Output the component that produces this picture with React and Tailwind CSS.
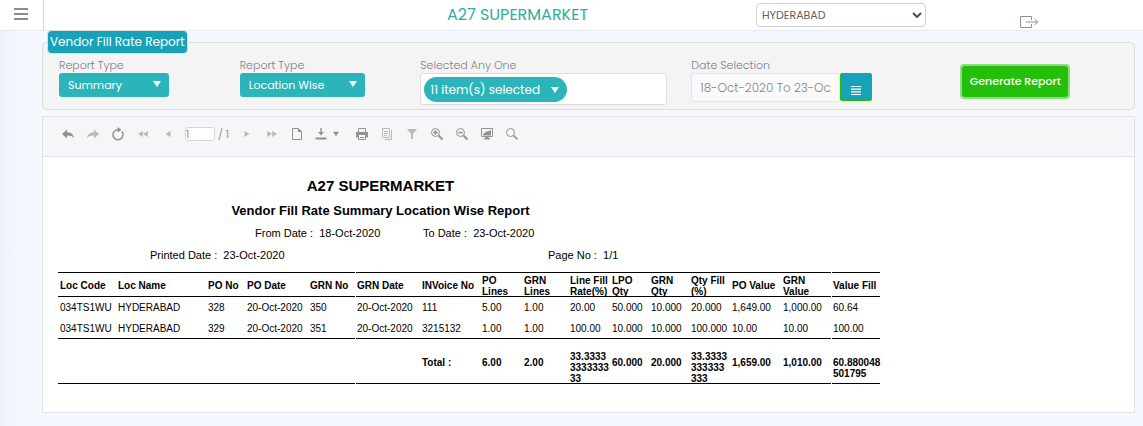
import React from "react";

const columns = [
  ["Loc Code", "w-[58px]"],
  ["Loc Name", "w-[90px]"],
  ["PO No", "w-[39px]"],
  ["PO Date", "w-[63px]"],
  ["GRN No", "w-[47px]"],
  ["GRN Date", "w-[65px]"],
  ["INVoice No", "w-[60px]"],
  ["PO\nLines", "w-[42px]"],
  ["GRN\nLines", "w-[46px]"],
  ["Line Fill\nRate(%)", "w-[42px]"],
  ["LPO\nQty", "w-[39px]"],
  ["GRN\nQty", "w-[40px]"],
  ["Qty Fill\n(%)", "w-[41px]"],
  ["PO Value", "w-[51px]"],
  ["GRN\nValue", "w-[50px]"],
  ["Value Fill", "w-[49px]"],
];

const rows = [
  ["034TS1WU", "HYDERABAD", "328", "20-Oct-2020", "350", "20-Oct-2020", "111", "5.00", "1.00", "20.00", "50.000", "10.000", "20.000", "1,649.00", "1,000.00", "60.64"],
  ["034TS1WU", "HYDERABAD", "329", "20-Oct-2020", "351", "20-Oct-2020", "3215132", "1.00", "1.00", "100.00", "10.000", "10.000", "100.000", "10.00", "10.00", "100.00"],
];

const totals = ["", "", "", "", "", "", "Total :", "6.00", "2.00", "33.3333\n3333333\n33", "60.000", "20.000", "33.3333\n333333\n333", "1,659.00", "1,010.00", "60.880048\n501795"];

// The rules of the report break before the GRN Date and Value Fill columns.
const startsSection = (i) => i === 5 || i === 15;
const cellEdge = (i) => (startsSection(i) ? "border-l border-white pl-px" : "pl-0.5");

function Icon({ children, dim }) {
  return (
    <svg
      viewBox="0 0 14 14"
      className={"h-3.5 w-3.5 " + (dim ? "text-[#b9b9bb]" : "text-[#929294]")}
      fill="none"
      stroke="currentColor"
      strokeWidth="1"
      aria-hidden="true"
    >
      {children}
    </svg>
  );
}

function Tool({ label, dim, children }) {
  return (
    <button type="button" aria-label={label} className="flex h-6 w-[25px] items-center justify-center">
      <Icon dim={dim}>{children}</Icon>
    </button>
  );
}

function Triangle({ className }) {
  return (
    <svg viewBox="0 0 8 6" className={"h-1.5 shrink-0 " + className} fill="currentColor" aria-hidden="true">
      <path d="M0 0h8L4 6z" />
    </svg>
  );
}

function TealSelect({ id, value, width }) {
  return (
    <div className={"relative " + width}>
      <select id={id} className="block h-6 w-full appearance-none rounded-[3px] bg-[#2bb5bb] pl-[9px] text-[11px] text-white">
        <option>{value}</option>
      </select>
      <Triangle className="pointer-events-none absolute top-2 right-2 w-2 text-white" />
    </div>
  );
}

const labelClass = "block text-[11px] leading-4 font-light text-[#7c7c8a]";

function Header() {
  return (
    <header className="grid h-[31px] grid-cols-[44px_250fr_447fr_200fr_202fr] border-b border-[#e3eaf1] bg-white">
      <div className="flex items-center border-r border-[#d3d6da] pb-0.5 pl-3.5">
        <button type="button" aria-label="Menu" className="flex flex-col gap-[3px]">
          <span className="h-0.5 w-3.5 bg-[#868c96]" />
          <span className="h-0.5 w-3.5 bg-[#868c96]" />
          <span className="h-0.5 w-3.5 bg-[#868c96]" />
        </button>
      </div>
      <h1 className="col-start-3 text-center text-base leading-[29px] text-[#2aaf9f]">A27 SUPERMARKET</h1>
      <div className="px-[15px] pt-[3px]">
        <div className="relative">
          <select aria-label="Location" className="block h-6 w-full appearance-none rounded border border-[#cfd3d7] bg-white pl-[5px] text-[11px] text-[#5a6068]">
            <option>HYDERABAD</option>
          </select>
          <svg viewBox="0 0 10 6" className="pointer-events-none absolute top-[9px] right-1 h-1.5 w-2.5 text-[#4a4f55]" fill="none" stroke="currentColor" strokeWidth="2" aria-hidden="true">
            <path d="M1 1l4 4 4-4" />
          </svg>
        </div>
      </div>
      <div className="pt-4 pl-[79px]">
        <button type="button" aria-label="Log out" className="block">
          <svg viewBox="0 0 19 12" className="h-3 w-[19px] text-[#8b929c]" fill="none" stroke="currentColor" aria-hidden="true">
            <path d="M11.500 4V.5H.5v11h11V8M6 6h12M14.500 3L17.800 6l-3.300 3" />
          </svg>
        </button>
      </div>
    </header>
  );
}

function Filters() {
  return (
    <fieldset className="rounded border border-[#dadde1] bg-[#f4f4f4] pr-1.5 pl-px">
      <legend className="ml-1 h-[22px] rounded-[3px] bg-[#18a2b8] px-0.5 text-xs leading-[22px] whitespace-nowrap text-white outline outline-[#dadde1]">
        Vendor Fill Rate Report
      </legend>
      <div className="grid grid-cols-[2fr_2fr_3fr_3fr_2fr] pt-1 pb-1">
        <div className="pl-[15px]">
          <label htmlFor="report-type" className={labelClass}>Report Type</label>
          <TealSelect id="report-type" value="Summary" width="w-[110px]" />
        </div>
        <div className="pl-[15px]">
          <label htmlFor="report-group" className={labelClass}>Report Type</label>
          <TealSelect id="report-group" value="Location Wise" width="w-[125px]" />
        </div>
        <div className="pr-[9px] pl-[15px]">
          <label htmlFor="items" className={labelClass}>Selected Any One</label>
          <div className="rounded-[3px] border border-[#dadde1] bg-white px-[3px] pt-[3px] pb-0.5">
            <button id="items" type="button" className="flex h-[25px] w-[143px] items-center justify-between rounded-full bg-[#2bb5bb] pr-2 pl-1.5 text-xs text-white">
              11 item(s) selected
              <Triangle className="w-2" />
            </button>
          </div>
        </div>
        <div className="pl-[15px]">
          <label htmlFor="dates" className={labelClass}>Date Selection</label>
          <div className="flex w-[181px]">
            <input id="dates" readOnly defaultValue="18-Oct-2020 To 23-Oct-2020" className="h-[29px] min-w-0 flex-1 rounded-[3px] border border-[#e2e4e6] bg-[#fafafa] px-2 text-xs font-light text-[#858585]" />
            <button type="button" aria-label="Choose dates" className="flex h-7 w-8 items-end justify-center rounded-[2px] border border-[#24bf0b] bg-[#18a2b8] pb-[5px]">
              <svg viewBox="0 0 10 9" className="h-[9px] w-2.5 text-white" fill="currentColor" aria-hidden="true">
                <path d="M0 0h10v1H0zM0 2.500h10v1.200H0zM0 5.200h10v1.200H0zM0 8h10v1H0z" />
              </svg>
            </button>
          </div>
        </div>
        <div className="pt-[9px] pl-[15px]">
          <button type="button" className="h-[31px] w-[106px] rounded-[2px] bg-[#24bf0b] text-[11px] font-medium whitespace-nowrap text-white outline-2 outline-[#8fdb84]">
            Generate Report
          </button>
        </div>
      </div>
    </fieldset>
  );
}

function Toolbar() {
  return (
    <div className="flex h-10 items-start border-b border-[#dfe3e8] bg-[#f6f6f8] pt-[5px] pl-3">
      <Tool label="Back">
        <path d="M1 7L6 2.500v2.800c4 0 6.500 2 7 6-1.500-2.200-3.500-2.800-7-2.800v3z" fill="currentColor" stroke="none" />
      </Tool>
      <Tool label="Forward" dim>
        <path d="M13 7L8 2.500v2.800c-4 0-6.500 2-7 6 1.500-2.200 3.500-2.800 7-2.800v3z" fill="currentColor" stroke="none" />
      </Tool>
      <Tool label="Refresh">
        <path d="M10.800 4.400A5 5 0 1 1 5.500 2.900H8" strokeWidth="1.500" />
        <path d="M6.500 0l4 2.700-4 2.700z" fill="currentColor" stroke="none" />
      </Tool>
      <Tool label="First page" dim>
        <path d="M6.800 4v6L2 7zM11.800 4v6L7 7z" fill="currentColor" stroke="none" />
      </Tool>
      <Tool label="Previous page" dim>
        <path d="M9.500 4v6L4.500 7z" fill="currentColor" stroke="none" />
      </Tool>
      <div className="flex h-6 w-[54px] items-center gap-[3px] pl-[5px] text-[11px] font-light text-[#7c7c7e]">
        <input aria-label="Page" defaultValue="1" className="h-3.5 w-[30px] rounded-[3px] border border-[#d4d7da] bg-white text-[11px] text-[#777]" />
        <span className="whitespace-nowrap">/ 1</span>
      </div>
      <Tool label="Next page" dim>
        <path d="M4.500 4v6l5-3z" fill="currentColor" stroke="none" />
      </Tool>
      <Tool label="Last page" dim>
        <path d="M2.200 4v6L7 7zM7.200 4v6L12 7z" fill="currentColor" stroke="none" />
      </Tool>
      <Tool label="Print preview">
        <path d="M2.500 1.500h6l3 3v8h-9z" />
        <path d="M8 1l4 4H8z" fill="currentColor" stroke="none" />
      </Tool>
      <button type="button" aria-label="Export" className="flex h-6 w-10 items-center gap-[5px] pl-[5px]">
        <Icon>
          <path d="M6.300 1h1.400v4h2.300L7 8.500 4 5h2.300zM1.500 10.500h11v2h-11z" fill="currentColor" stroke="none" />
        </Icon>
        <Triangle className="w-1.5 text-[#8c8c8e]" />
      </button>
      <Tool label="Print">
        <path d="M3.500 5V1.500h7V5" />
        <path d="M1 5h12v5.500h-2.500V8h-7v2.500H1z" fill="currentColor" stroke="none" />
        <path d="M3.500 8.500v4h7v-4M5 10.500h4" />
      </Tool>
      <Tool label="Page setup" dim>
        <path d="M2.500 1.500h7v9h-7zM11.500 3v9.500h-7M4 4.500h4M4 6.500h4M4 8.500h3" />
      </Tool>
      <Tool label="Filter" dim>
        <path d="M2 2h10L8 7v5H6V7z" fill="currentColor" stroke="none" />
      </Tool>
      <Tool label="Zoom in">
        <circle cx="5.500" cy="5.500" r="4" />
        <path d="M5.500 3.200v4.600M3.200 5.500h4.600" strokeWidth="1.500" />
        <path d="M8.500 8.500l4 4" strokeWidth="2" />
      </Tool>
      <Tool label="Zoom out">
        <circle cx="5.500" cy="5.500" r="4" />
        <path d="M3.200 5.500h4.600" strokeWidth="1.500" />
        <path d="M8.500 8.500l4 4" strokeWidth="2" />
      </Tool>
      <Tool label="Full page">
        <path d="M1.500 1.500h11v8h-11z" />
        <path d="M3 8.500V7l3.500-2.500L11 3.200v5.300zM5.500 10h3v1h1.500v1.500H4V11h1.500z" fill="currentColor" stroke="none" />
      </Tool>
      <Tool label="Search">
        <circle cx="5.500" cy="5.500" r="4" />
        <path d="M8.500 8.500l4 4" strokeWidth="1.700" />
      </Tool>
    </div>
  );
}

function ReportTable() {
  return (
    <table className="mt-[9px] w-[822px] table-fixed border-separate border-spacing-0 text-left text-[10px] leading-[11px] whitespace-pre text-black">
      <colgroup>
        {columns.map(([name, width]) => (
          <col key={name} className={width} />
        ))}
      </colgroup>
      <thead>
        <tr className="h-[25px]">
          {columns.map(([name], i) => (
            <th key={name} className={"pt-0.5 pr-0 pb-0 align-middle font-bold shadow-[inset_0_1px_0_#000,inset_0_-1px_0_#000] " + cellEdge(i)}>
              {name}
            </th>
          ))}
        </tr>
      </thead>
      <tbody>
        {rows.map((row, r) => (
          <tr key={row[2]} className="h-[21px]">
            {row.map((value, i) => (
              <td key={i} className={"p-0 align-middle " + cellEdge(i) + (r === rows.length - 1 ? " shadow-[inset_0_-1px_0_#000]" : "")}>
                {value}
              </td>
            ))}
          </tr>
        ))}
      </tbody>
      <tfoot>
        <tr className="h-[45px]">
          {totals.map((value, i) => (
            <td key={i} className={"pr-0 pb-0 align-top font-bold shadow-[inset_0_-1px_0_#000] " + cellEdge(i) + (i === 9 || i === 12 ? " pt-3" : " pt-[18px]")}>
              {value}
            </td>
          ))}
        </tr>
      </tfoot>
    </table>
  );
}

function Report() {
  return (
    <article className="overflow-x-auto bg-white pt-5 pb-7 pl-[15px] font-['Liberation_Sans',Arial,sans-serif] text-[11px] leading-4 text-black">
      <div className="w-[645px]">
        <h2 className="text-center text-[15px] leading-[18px] font-bold">A27 SUPERMARKET</h2>
        <h3 className="mt-1.5 text-center text-[13px] leading-5 font-bold">Vendor Fill Rate Summary Location Wise Report</h3>
        <div className="mt-1 grid grid-cols-[168px_1fr] pl-[197px]">
          <p>From Date :&nbsp; 18-Oct-2020</p>
          <p>To Date :&nbsp; 23-Oct-2020</p>
        </div>
        <div className="mt-1.5 grid grid-cols-[398px_1fr] pl-[92px]">
          <p>Printed Date :&nbsp; 23-Oct-2020</p>
          <p>Page No :&nbsp; 1/1</p>
        </div>
      </div>
      <ReportTable />
    </article>
  );
}

export default function App() {
  return (
    <div className="min-h-screen bg-[#f5f9ff] bg-[linear-gradient(to_right,#edf1f9,#f5f9ff_20px)] font-[Poppins,Inter,sans-serif]">
      <Header />
      <main className="pr-2 pb-3 pl-[42px]">
        <Filters />
        <section className="mt-1.5 border border-[#dfe3e8]">
          <Toolbar />
          <Report />
        </section>
      </main>
    </div>
  );
}
